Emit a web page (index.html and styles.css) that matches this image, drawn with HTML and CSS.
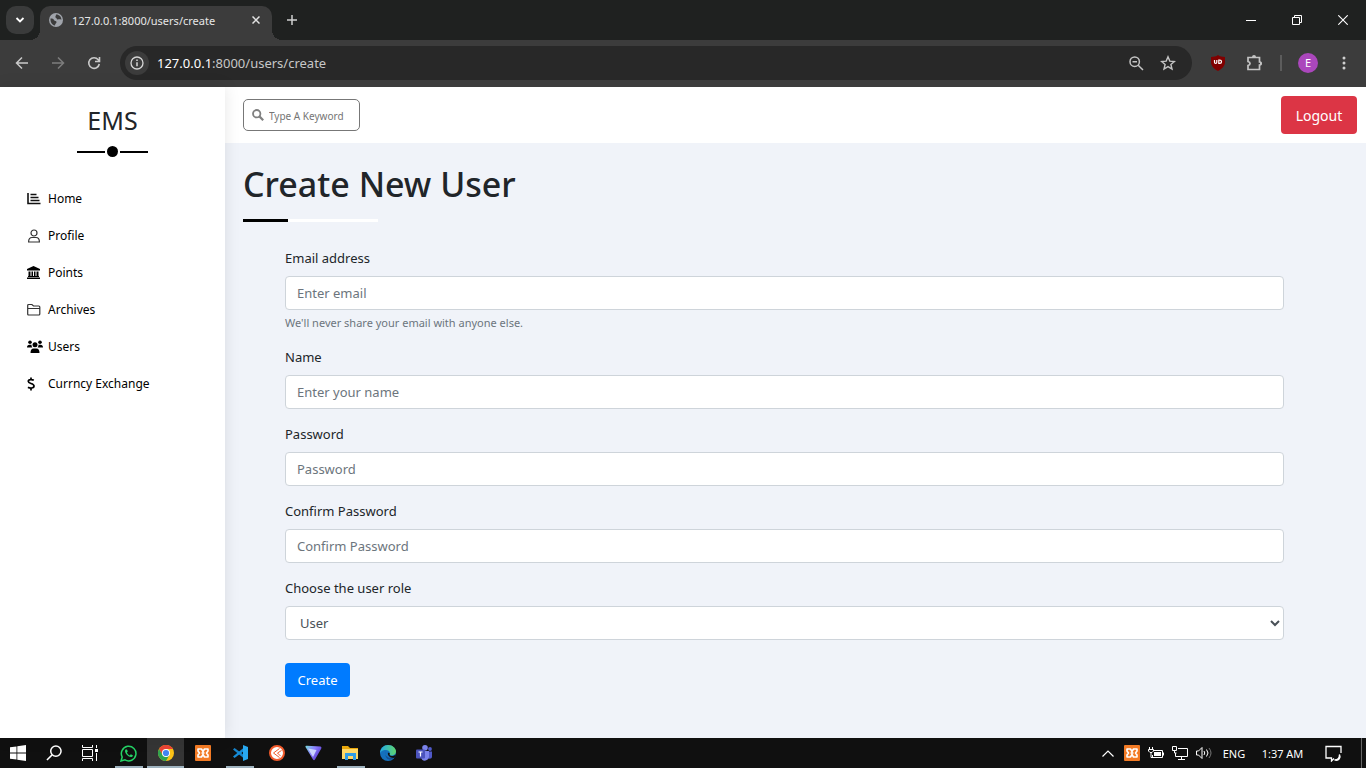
FILE: index.html
```html
<!DOCTYPE html>
<html lang="en">
<head>
<meta charset="utf-8">
<title>Create New User</title>
<link rel="stylesheet" href="styles.css">
</head>
<body>
<div class="tab-strip">
  <button class="tab-search" aria-label="Search tabs"><svg width="10" height="10" viewBox="0 0 10 10"><path d="M1.5 3 5 6.500 8.500 3" fill="none" stroke="#fff" stroke-width="1.8"/></svg></button>
  <div class="tab">
    <svg width="14" height="14" viewBox="0 0 14 14"><circle cx="7" cy="7" r="7" fill="#a0a4ab"/><path d="M1.500 5.500c2 0 3 .2 3.500 1.500s2.500.5 2.500 2-1.500 1.500-1.500 3.500C3 12 1.300 9.500 1.500 5.500zM7 1.500c-.5 1 .3 1.500-.8 2.300C5.800 4.600 8 5 8 6.200c1 .8 2.300-.7 4.400.6C12.500 3.800 10 1.300 7 1.500z" fill="#3c3c3c"/></svg>
    <span class="tab-title">127.0.0.1:8000/users/create</span>
    <button class="tab-close" aria-label="Close tab"><svg width="8" height="8" viewBox="0 0 8 8"><path d="M.5.5l7 7m0-7-7 7" stroke="#e3e3e3" stroke-width="1.500"/></svg></button>
  </div>
  <button class="new-tab" aria-label="New tab"><svg width="12" height="12" viewBox="0 0 12 12"><path d="M6 1v10M1 6h10" stroke="#d0d0d0" stroke-width="1.500"/></svg></button>
  <div class="window-controls">
    <button aria-label="Minimize"><svg width="10" height="10" viewBox="0 0 10 10"><path d="M0 5.500h10" stroke="#fff"/></svg></button>
    <button aria-label="Restore"><svg width="10" height="10" viewBox="0 0 10 10" fill="none" stroke="#fff"><path d="M.5 2.500h7v7h-7zM2.500 2.500v-2h7v7h-2"/></svg></button>
    <button aria-label="Close window"><svg width="10" height="10" viewBox="0 0 10 10"><path d="M.3.3l9.400 9.400m0-9.400-9.400 9.400" stroke="#fff" stroke-width="1.100"/></svg></button>
  </div>
</div>

<div class="toolbar">
  <button class="tool" aria-label="Back"><svg width="14" height="14" viewBox="0 0 14 14" fill="none" stroke="#c9c9c9" stroke-width="1.500"><path d="M13 7H2M7 1.500 1.500 7 7 12.500"/></svg></button>
  <button class="tool" aria-label="Forward"><svg width="14" height="14" viewBox="0 0 14 14" fill="none" stroke="#7d7d7d" stroke-width="1.500"><path d="M1 7h11M7 1.500 12.500 7 7 12.500"/></svg></button>
  <button class="tool" aria-label="Reload"><svg width="14" height="14" viewBox="0 0 14 14" fill="none" stroke="#c9c9c9" stroke-width="1.600"><path d="M12.300 8A5.300 5.300 0 1 1 11.200 3.700L12.300 5M12.500 1v4.500H8"/></svg></button>
  <div class="omnibox">
    <button class="site-info" aria-label="Site information"><svg width="14" height="14" viewBox="0 0 14 14"><circle cx="7" cy="7" r="6" fill="none" stroke="#d6d6d6" stroke-width="1.300"/><path d="M7 6.200v4M7 3.500v1.500" stroke="#d6d6d6" stroke-width="1.500"/></svg></button>
    <a class="address" href="#"><strong>127.0.0.1</strong>:8000/users/create</a>
    <button class="omni-action" aria-label="Zoom"><svg width="15" height="15" viewBox="0 0 15 15" fill="none" stroke="#c4c4c4" stroke-width="1.500"><circle cx="5.700" cy="5.700" r="4.700"/><path d="M9.200 9.200 14 14M3.500 5.700h4.500"/></svg></button>
    <button class="omni-action" aria-label="Bookmark"><svg width="16" height="16" viewBox="0 0 16 16" fill="none" stroke="#c4c4c4" stroke-width="1.400"><path d="m8 1.800 1.800 4.300 4.600.4-3.500 3 1.100 4.600L8 11.600l-4 2.500 1.100-4.600-3.500-3 4.600-.4z"/></svg></button>
  </div>
  <button class="tool" aria-label="uBlock"><svg width="14" height="16" viewBox="0 0 14 16"><path d="M7 0c2 1.500 4 1.800 7 2v5c0 4-3 7-7 9-4-2-7-5-7-9V2c3-.2 5-.5 7-2z" fill="#800000"/><path d="M3.500 5v2.200c0 1.500 2.300 1.500 2.300 0V5M7.800 5.200v3.200h1c2.300 0 2.300-3.200 0-3.200z" fill="none" stroke="#fff" stroke-width="1.200"/></svg></button>
  <button class="tool" aria-label="Extensions"><svg width="18" height="18" viewBox="0 0 18 18"><path d="M3 3.500h11.500v4.500a1.500 1.500 0 0 1 0 3v4.500H3v-4c2.700-.7 2.700-3.300 0-4z" fill="none" stroke="#c4c4c4" stroke-width="1.700"/><path d="M7 3a2 2 0 0 1 4 0zM15 7.500a2 2 0 0 1 0 4z" fill="#c4c4c4"/></svg></button>
  <span class="tool-separator"></span>
  <button class="tool" aria-label="Profile"><span class="avatar">E</span></button>
  <button class="tool" aria-label="Menu"><svg width="4" height="14" viewBox="0 0 4 14" fill="#d0d0d0"><circle cx="2" cy="2" r="1.500"/><circle cx="2" cy="7" r="1.500"/><circle cx="2" cy="12" r="1.500"/></svg></button>
</div>

<div class="page">
  <aside class="sidebar">
    <h2 class="brand">EMS</h2>
    <div class="brand-rule"><span class="rule-line"></span><span class="rule-dot"></span><span class="rule-line"></span></div>
    <nav class="menu">
      <a href="#"><svg width="16" height="14" viewBox="0 0 16 14" fill="none" stroke="#111" stroke-width="1.600"><path d="M1 1v10.500h12.500M3.500 2.500h6M3.500 5.500h8M3.500 8.500h9"/></svg>Home</a>
      <a href="#"><svg width="16" height="14" viewBox="0 0 16 14" fill="none" stroke="#333" stroke-width="1.200"><circle cx="7" cy="4" r="3"/><path d="M1.600 13c0-3 1.400-4.500 3.400-4.500h4c2 0 3.400 1.500 3.400 4.500z"/></svg>Profile</a>
      <a href="#"><svg width="16" height="14" viewBox="0 0 16 14" fill="#000"><path d="M6.500 0 13 3v1.500H0V3zM1.500 5.500h2V10h1V5.500h1.500V10h1V5.500h1.500V10h1V5.500h2V10h.5v1h-11v-1h.5zM0 11.500h13V13H0z"/></svg>Points</a>
      <a href="#"><svg width="16" height="14" viewBox="0 0 16 14" fill="none" stroke="#333" stroke-width="1.200"><path d="M.7 11V2.500Q.7 1.500 1.700 1.500h3.200L6.500 3h5.300q1 0 1 1v7q0 1-1 1H1.700q-1 0-1-1zM.7 5.500h12"/></svg>Archives</a>
      <a href="#"><svg width="16" height="14" viewBox="0 0 16 14" fill="#000"><circle cx="3" cy="2.200" r="1.800"/><circle cx="13" cy="2.200" r="1.800"/><circle cx="8" cy="4.800" r="2.500"/><path d="M0 7.500C0 5.500 1 4.700 2.500 4.700h2C4.500 6 5 7 5.300 7.500zM16 7.500c0-2-1-2.800-2.500-2.800h-2c0 1.300-.5 2.300-.8 2.800zM3.500 13c0-3 1-4.500 3-4.500h3c2 0 3 1.500 3 4.500z"/></svg>Users</a>
      <a href="#"><svg width="16" height="14" viewBox="0 0 16 14" fill="none" stroke="#000" stroke-width="1.700"><path d="M6.800 3.300C5.500 2.500 1.300 2 1.300 4.500 1.300 7 7 6 7 9c0 2.600-4.500 2.300-6 1.200M4 .5v2M4 11v2.500"/></svg>Currncy Exchange</a>
    </nav>
  </aside>
  <main class="main">
    <header class="topbar">
      <div class="search">
        <svg width="12" height="12" viewBox="0 0 12 12" fill="none" stroke="#808080"><circle cx="4.700" cy="4.700" r="3.700" stroke-width="1.800"/><path d="m7.400 7.400 3.800 3.800" stroke-width="2.200"/></svg>
        <input type="text" aria-label="Search" placeholder="Type A Keyword">
      </div>
      <button class="logout">Logout</button>
    </header>
    <section class="content">
      <h1 class="title">Create New User</h1>
      <div class="title-rule"></div>
      <form class="form">
        <div class="field">
          <label for="email">Email address</label>
          <input id="email" type="email" placeholder="Enter email" aria-describedby="email-help">
          <small id="email-help">We'll never share your email with anyone else.</small>
        </div>
        <div class="field"><label for="name">Name</label><input id="name" type="text" placeholder="Enter your name"></div>
        <div class="field"><label for="password">Password</label><input id="password" type="password" placeholder="Password"></div>
        <div class="field"><label for="confirm">Confirm Password</label><input id="confirm" type="password" placeholder="Confirm Password"></div>
        <div class="field"><label for="role">Choose the user role</label><select id="role"><option>User</option></select></div>
        <button class="create" type="button">Create</button>
      </form>
    </section>
  </main>
</div>

<footer class="taskbar">
  <button class="task" aria-label="Start"><svg width="16" height="16" viewBox="0 0 16 16" fill="#fff"><path d="M0 2.300 6.500 1.400v6.200H0zM7.300 1.300 16 0v7.600H7.300zM0 8.400h6.500v6.200L0 13.700zM7.300 8.400H16V16l-8.700-1.300z"/></svg></button>
  <button class="task" aria-label="Search"><svg width="16" height="16" viewBox="0 0 17 17" fill="none" stroke="#fff" stroke-width="1.600"><circle cx="10.500" cy="6.500" r="5.500"/><path d="M6.500 10.500 1 16"/></svg></button>
  <button class="task" aria-label="Task view"><svg width="16" height="16" viewBox="0 0 16 16" fill="none" stroke="#fff"><path d="M.5 4.500h10v7H.5zM.5 0v2.500h10V0M.5 16v-2.500h10V16M14.500 0v3M14.500 8v8"/><path d="M13 4h3v3h-3z" fill="#fff" stroke="none"/></svg></button>
  <div class="apps">
    <button class="task app running" aria-label="WhatsApp"><svg width="17" height="17" viewBox="0 0 17 17"><path d="m1 16 1.200-4A7.300 7.300 0 1 1 5 14.900z" fill="none" stroke="#25d366" stroke-width="1.500"/><path d="M5.500 4.500c-2 2.500 2.700 8 6 7.500 1-.3 1.500-1 1.300-1.800l-2-1-1 1.200C8.500 10 7.200 8.500 6.900 7.500l.9-1-.8-2z" fill="#25d366"/></svg></button>
    <button class="task app active" aria-label="Chrome"><svg width="16" height="16" viewBox="0 0 16 16"><circle cx="8" cy="8" r="8" fill="#fbc116"/><path d="M1.070 4A8 8 0 0 1 14.930 4H8L4.540 10z" fill="#ea4335"/><path d="M1.070 4A8 8 0 0 0 8 16l3.460-6H4.540z" fill="#31a350"/><circle cx="8" cy="8" r="4" fill="#fff"/><circle cx="8" cy="8" r="3.100" fill="#4285f4"/></svg></button>
    <button class="task app" aria-label="XAMPP"><svg width="16" height="16" viewBox="0 0 16 16"><rect width="16" height="16" rx="1" fill="#f37b25"/><path d="M3 6V4h3.500L8 6.500 9.500 4H13v2l-1.500 2L13 10v2H9.500L8 9.500 6.500 12H3v-2l1.500-2zM6.500 8h3" fill="none" stroke="#fff" stroke-width="1.600" stroke-linejoin="round"/></svg></button>
    <button class="task app running" aria-label="Visual Studio Code"><svg width="16" height="16" viewBox="0 0 16 16"><path d="m1 4.500 11 9V10L2.500 3z" fill="#1683ca"/><path d="m1 11.500 11-9V6l-9.500 7z" fill="#168cd8"/><path d="M11 0l5 2v12l-5 2z" fill="#28a8f0"/></svg></button>
    <button class="task app" aria-label="Postman"><svg width="16" height="16" viewBox="0 0 16 16"><circle cx="8" cy="8" r="7" fill="#fff" stroke="#f15a2b" stroke-width="2"/><path d="M10.500 3.500 4.500 8l6 4.500M12.500 5.500 8.500 8l3 3" fill="none" stroke="#f15a2b"/></svg></button>
    <button class="task app" aria-label="Proton VPN"><svg width="17" height="16" viewBox="0 0 17 16"><defs><linearGradient id="vpn" x2="1" y2="0.600"><stop offset="0" stop-color="#75ded8"/><stop offset="0.500" stop-color="#8b7dff"/><stop offset="1" stop-color="#5636c9"/></linearGradient></defs><path d="M.5 2Q0 .5 2 .7L15.500 1.500q1.500.3.800 2L10 14.500q-1 1.500-2 0z" fill="url(#vpn)"/><path d="M3 3.500 11.500 5 8 12z" fill="#cbd4ff"/></svg></button>
    <button class="task app running" aria-label="File Explorer"><svg width="17" height="16" viewBox="0 0 17 16"><path d="M0 1h6l2 2h8v11H0z" fill="#eaa80b"/><path d="M0 4h16v10H0z" fill="#ffd767"/><path d="M3 8h11v7h-3v-4H6v4H3z" fill="#2f9be6"/></svg></button>
    <button class="task app" aria-label="Edge"><svg width="16" height="16" viewBox="0 0 16 16"><defs><linearGradient id="edge"><stop offset="0" stop-color="#22a9e5"/><stop offset="1" stop-color="#5fd66d"/></linearGradient></defs><circle cx="8" cy="8" r="8" fill="#1470bd"/><path d="M0 8C.5 3 4 0 8 0c5 0 8 3.500 8 6.500S13 11 10 10.500c-1-.3-.5-1 0-1.700C10.500 6 7 4.500 4.500 5 2 5.500.5 7 0 8z" fill="url(#edge)"/><path d="M6 6.500C4 10 7 13.500 13.500 13 10 17 3.500 13.500 6 6.500z" fill="#154e94"/><path d="M10 8.500c-1 1.500 0 2.500 2 2.500 1.500 0 3-.7 4-1.500-.3 1.500-.8 2.500-1.500 3.300C11 13.500 7 11 8 7.500z" fill="#101010"/></svg></button>
    <button class="task app" aria-label="Teams"><svg width="17" height="16" viewBox="0 0 17 16"><circle cx="9" cy="2.800" r="2.800" fill="#7b83eb"/><circle cx="14" cy="4" r="1.900" fill="#5059c9"/><path d="M11 6.500h5v5c0 2.500-3 3-5 1z" fill="#5059c9"/><path d="M5 6h8v5.500c0 5-8 6-8 0z" fill="#7b83eb"/><rect y="4.500" width="9" height="9" rx="1" fill="#4b53bc"/><path d="M2.500 7h4M4.500 7v4.500" stroke="#fff" stroke-width="1.200"/></svg></button>
  </div>
  <div class="tray">
    <button aria-label="Show hidden icons"><svg width="12" height="7" viewBox="0 0 12 7"><path d="m.5 6.500 5.500-5.500 5.500 5.500" fill="none" stroke="#fff" stroke-width="1.200"/></svg></button>
    <button aria-label="XAMPP control"><svg width="16" height="16" viewBox="0 0 16 16"><rect width="16" height="16" rx="1" fill="#f37b25"/><path d="M3 6V4h3.500L8 6.500 9.500 4H13v2l-1.500 2L13 10v2H9.500L8 9.500 6.500 12H3v-2l1.500-2zM6.500 8h3" fill="none" stroke="#fff" stroke-width="1.600" stroke-linejoin="round"/></svg></button>
    <button aria-label="Battery"><svg width="16" height="12" viewBox="0 0 16 12" fill="none" stroke="#fff"><path d="M6 3.500h8.500v7H4.500V8M15.500 5.500v3M1.500 0v2M4.500 0v2M.5 2.500h5V4L4 5.500H2L.5 4zM3 5.500v5h2"/><path d="M6 5h7v4H6z" fill="#fff" stroke="none"/></svg></button>
    <button aria-label="Network"><svg width="16" height="14" viewBox="0 0 16 14" fill="none" stroke="#fff"><path d="M6 2.500h9.500v8H3.500V7M9.500 10.500v3M6 13.500h7M.5.500h4v4h-4zM2.500 4.500V7h2"/></svg></button>
    <button aria-label="Volume"><svg width="16" height="14" viewBox="0 0 16 14" fill="none" stroke="#fff"><path d="M.5 5v4h2L6 12.500v-11L2.500 5zM8 5q1.500 2 0 4M10.500 3.500q3 3.500 0 7"/><path d="M13 2q4 5 0 10" stroke="#777"/></svg></button>
    <button class="lang">ENG</button>
    <button class="clock">1:37 AM</button>
    <button class="notice" aria-label="Notifications"><svg width="17" height="17" viewBox="0 0 17 17" fill="none" stroke="#fff" stroke-width="1.300"><path d="M9 13.500 6.500 16v-3H1V1.500h15V8"/><path d="M14.500 9.500c1.500 3-.5 7-5 5.500 3 0 5-2 5-5.500z" fill="#fff"/></svg></button>
    <span class="desktop-edge"></span>
  </div>
</footer>
</body>
</html>
```
FILE: styles.css
```css
* { box-sizing: border-box; }
body {
  margin: 0;
  height: 100vh;
  display: flex;
  flex-direction: column;
  overflow: hidden;
  font-family: "Noto Sans", "Open Sans", sans-serif;
  color: #212529;
}
button, input, select { font-family: inherit; }
button {
  display: flex;
  align-items: center;
  justify-content: center;
  padding: 0;
  border: 0;
  background: none;
  color: inherit;
}
svg { display: block; flex: none; }
a { text-decoration: none; color: inherit; }

/* Browser tabs */
.tab-strip {
  flex: none;
  display: flex;
  align-items: center;
  height: 40px;
  padding-left: 6px;
  background: #1f2120;
}
.tab-search { width: 28px; height: 28px; border-radius: 10px; background: #3a3b3b; }
.tab {
  position: relative;
  align-self: flex-end;
  display: flex;
  align-items: center;
  gap: 9px;
  width: 232px;
  height: 34px;
  margin-left: 6px;
  padding: 0 8px 6px 9px;
  border-radius: 10px 10px 0 0;
  background: #3c3c3c;
}
.tab::before, .tab::after {
  content: "";
  position: absolute;
  bottom: 0;
  width: 10px;
  height: 10px;
}
.tab::before { left: -10px; background: radial-gradient(circle at 0 0, transparent 10px, #3c3c3c 10px); }
.tab::after { right: -10px; background: radial-gradient(circle at 100% 0, transparent 10px, #3c3c3c 10px); }
.tab-title { flex: 1; font-size: 11px; color: #e6e6e6; white-space: nowrap; }
.tab-close { width: 16px; height: 16px; }
.new-tab { width: 28px; height: 28px; margin-left: 6px; }
.window-controls { display: flex; margin-left: auto; }
.window-controls button { width: 46px; height: 40px; }

/* Browser toolbar */
.toolbar {
  flex: none;
  display: flex;
  align-items: center;
  height: 47px;
  padding: 0 4px 1px;
  background: #3c3c3c;
}
.tool { width: 36px; height: 36px; }
.omnibox {
  flex: 1;
  display: flex;
  align-items: center;
  height: 34px;
  margin: 0 8px;
  padding: 0 8px 0 5px;
  border-radius: 17px;
  background: #282828;
}
.site-info { width: 24px; height: 24px; border-radius: 50%; background: #3c3c3c; }
.address { flex: 1; margin-left: 8px; font-size: 13px; color: #c7c7c7; }
.address strong { font-weight: 400; color: #fff; }
.omni-action { width: 32px; height: 32px; }
.tool-separator { width: 2px; height: 16px; margin: 0 8px; background: #5c5c5c; }
.avatar {
  width: 20px;
  border-radius: 50%;
  background: #ab47bc;
  color: #fff;
  font-size: 11px;
  line-height: 20px;
}

/* Application */
.page { flex: 1; display: flex; min-height: 0; background: #f0f3f9; }
.sidebar {
  z-index: 1;
  flex: none;
  width: 225px;
  padding-top: 15px;
  background: #fff;
  box-shadow: 0 0 15px rgba(0, 0, 0, 0.1);
}
.brand { margin: 0; font-size: 25px; line-height: 36px; font-weight: 400; text-align: center; }
.brand-rule { display: flex; align-items: center; justify-content: center; gap: 2px; margin-top: 8px; }
.rule-line { width: 28px; height: 2px; background: #000; }
.rule-dot { width: 11px; height: 11px; border-radius: 50%; background: #000; }
.menu { margin-top: 23px; padding-left: 27px; }
.menu a {
  display: flex;
  align-items: center;
  gap: 5px;
  font-size: 12px;
  line-height: 37px;
  color: #000;
}
.main { flex: 1; min-width: 0; }
.topbar {
  display: flex;
  align-items: center;
  justify-content: space-between;
  height: 56px;
  padding: 0 9px 0 18px;
  background: #fff;
}
.search {
  display: flex;
  align-items: center;
  gap: 5px;
  width: 117px;
  height: 32px;
  padding: 0 8px;
  border: 1px solid #777;
  border-radius: 5px;
}
.search input {
  min-width: 0;
  flex: 1;
  padding: 2px 0 0;
  border: 0;
  outline: 0;
  font-size: 10px;
}
.search input::placeholder { color: #757575; }
.logout {
  width: 76px;
  height: 38px;
  border-radius: 4px;
  background: #dc3545;
  color: #fff;
  font-size: 14px;
}
.content { padding: 17px 18px 0; }
.title { margin: 0; font-size: 34px; line-height: 48px; font-weight: 500; }
.title-rule {
  width: 135px;
  height: 3px;
  margin-top: 11px;
  background: linear-gradient(to right, #000 45px, #fff 45px);
}
.form { padding: 25px 64px 0 42px; }
.field { display: flex; flex-direction: column; margin-bottom: 14px; }
.field label { margin-bottom: 7px; font-size: 13px; line-height: 22px; }
.field input, .field select {
  width: 100%;
  height: 34px;
  padding: 0 11px;
  border: 1px solid #ced4da;
  border-radius: 4px;
  background-color: #fff;
  color: #495057;
  font-size: 13px;
}
.field select { padding: 0 1px 0 10px; }
.field input::placeholder { color: #6c757d; }
.field small { margin-top: 4px; font-size: 11px; line-height: 18px; color: #6c757d; }
.create {
  width: 65px;
  height: 34px;
  margin-top: 23px;
  border-radius: 4px;
  background: #007bff;
  color: #fff;
  font-size: 13px;
}

/* Desktop taskbar */
.taskbar {
  flex: none;
  display: flex;
  height: 30px;
  background: #101010;
  color: #fff;
}
.task { width: 36px; height: 30px; }
.apps { display: flex; margin-left: 2px; }
.app { width: 37px; }
.running { background: linear-gradient(#9fb3bf, #9fb3bf) center bottom / 28px 2px no-repeat; }
.active { background: linear-gradient(#9fb3bf, #9fb3bf) center bottom / 100% 2px no-repeat #353535; }
.tray { display: flex; margin-left: auto; }
.tray button { width: 24px; height: 30px; font-size: 11px; white-space: nowrap; }
.tray .lang { width: 36px; }
.tray .clock { width: 61px; }
.tray .notice { width: 40px; }
.desktop-edge { width: 1px; margin: 0 4px 0 8px; background: #666; }
```
